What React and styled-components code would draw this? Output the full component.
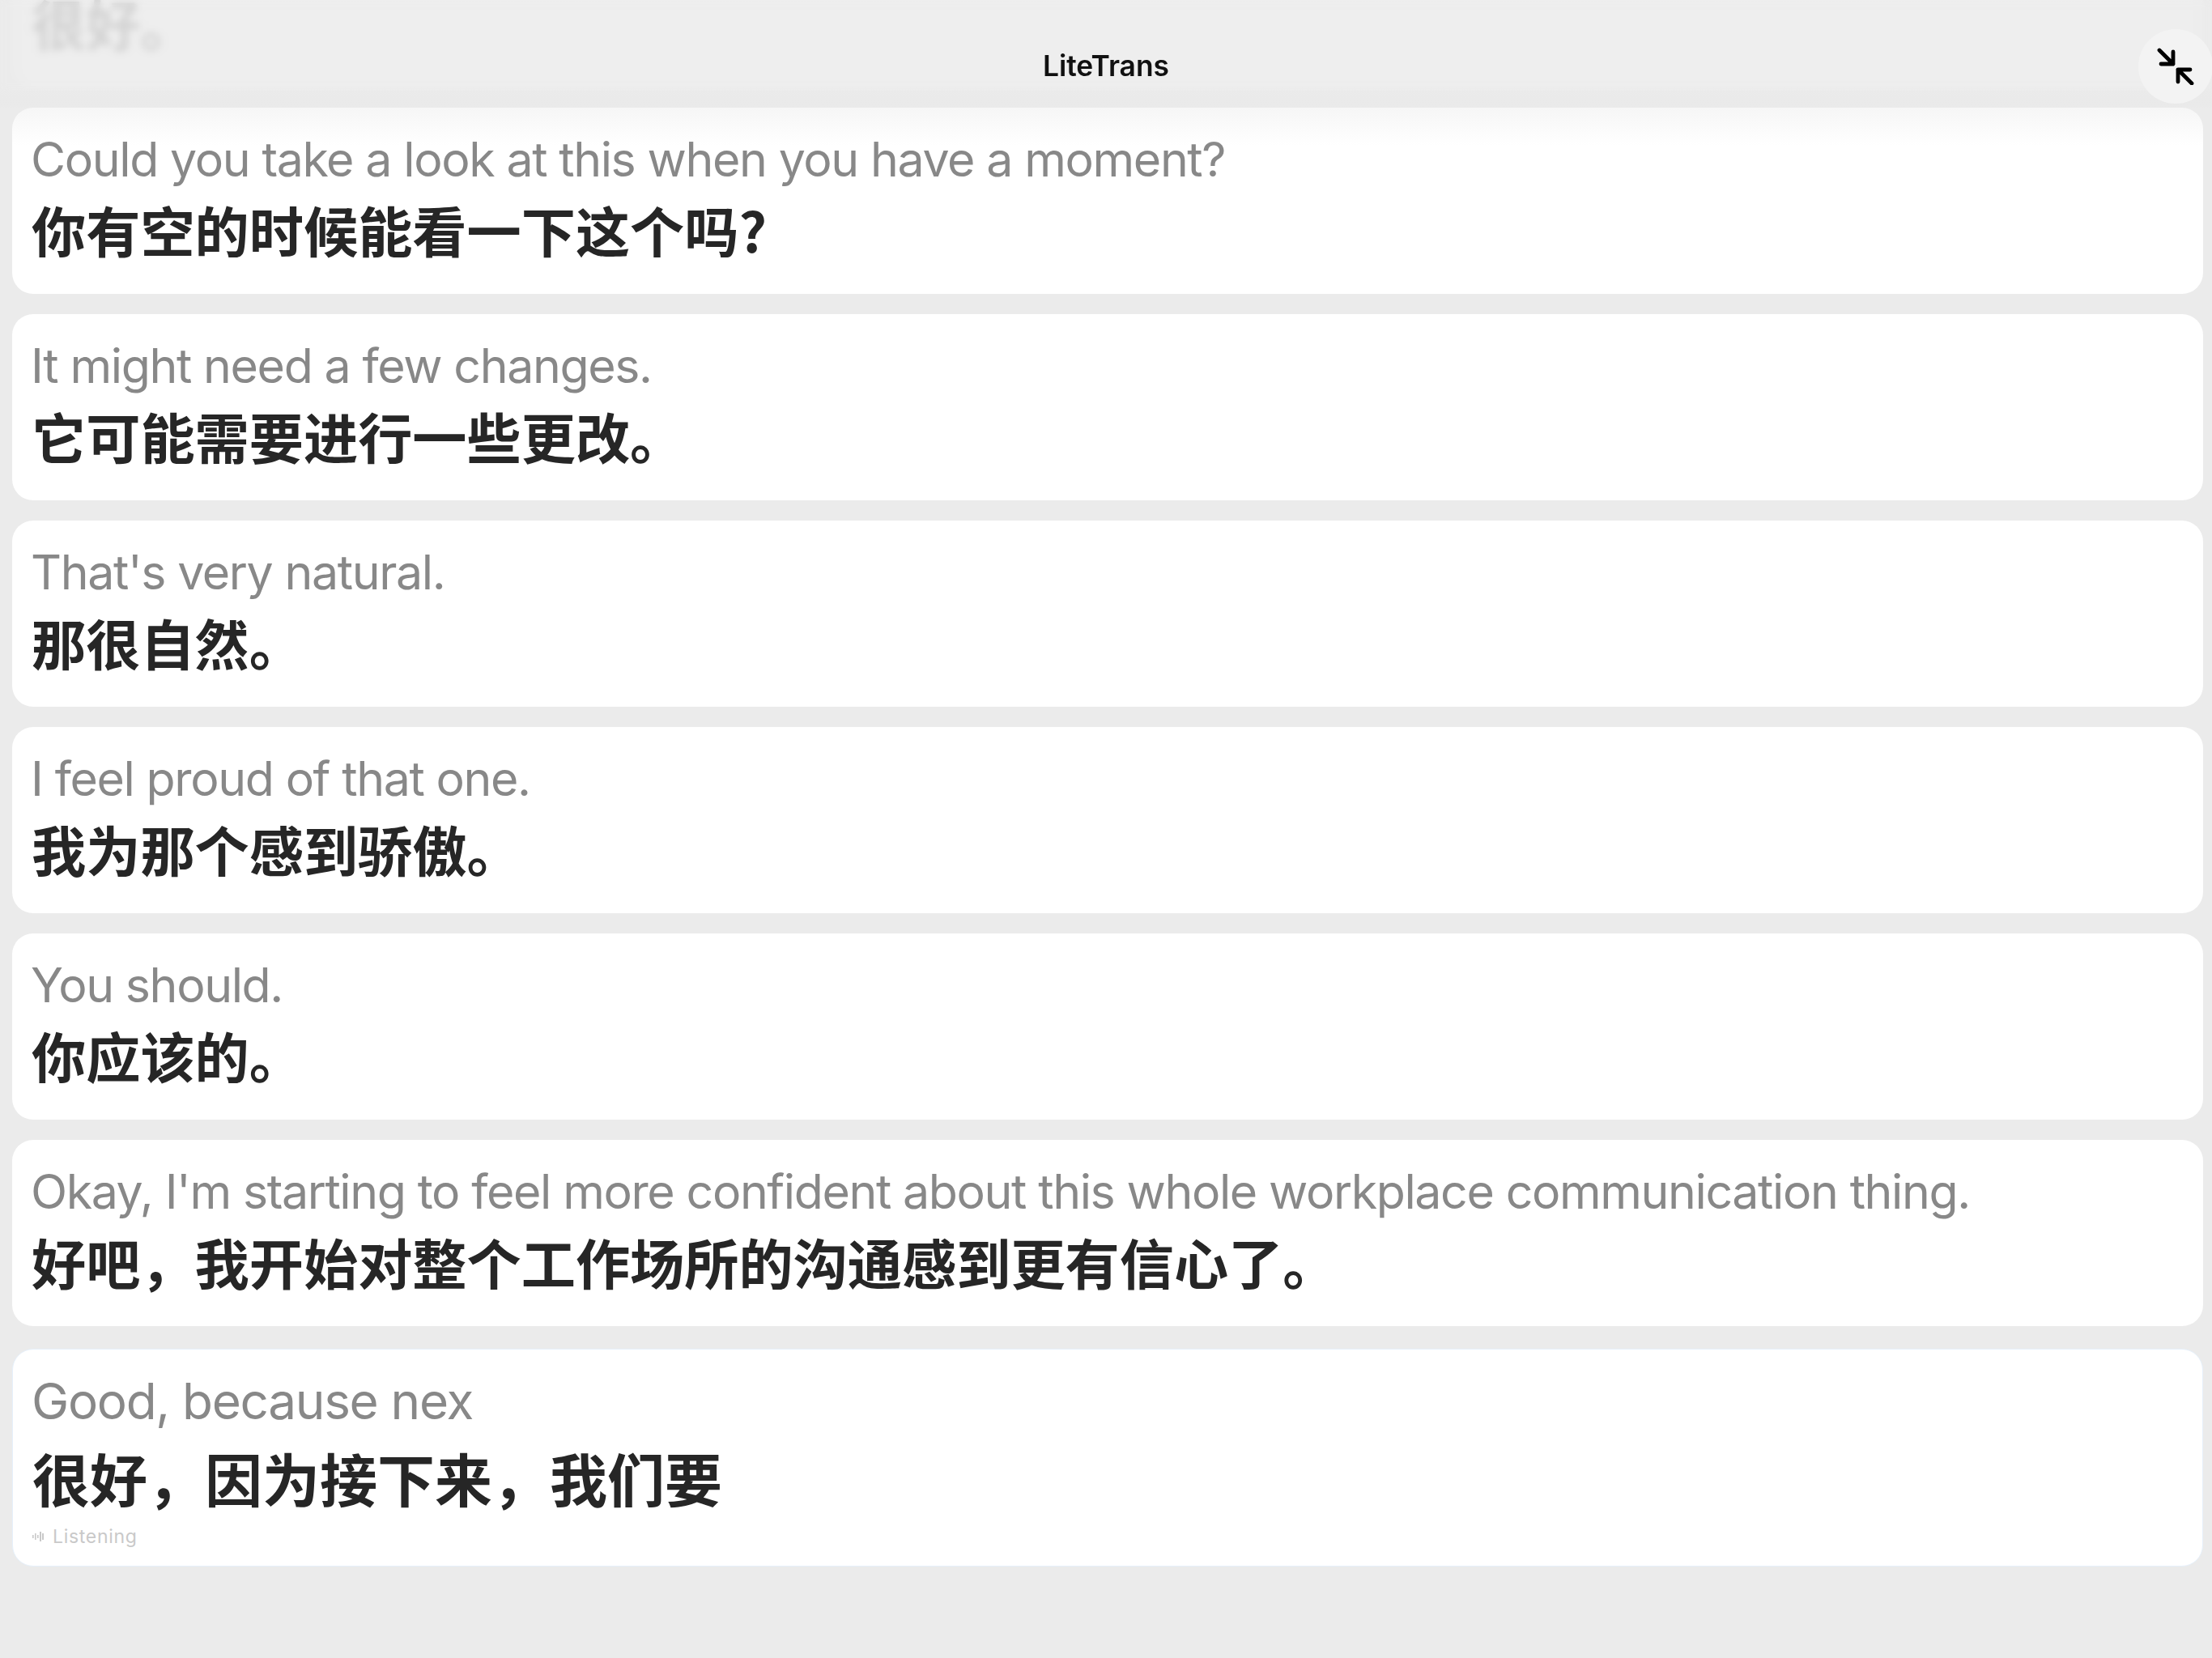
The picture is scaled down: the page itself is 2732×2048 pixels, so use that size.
import React from 'react';
import styled, { createGlobalStyle } from 'styled-components';

const GlobalStyle = createGlobalStyle`
  html, body {
    margin: 0;
    padding: 0;
    background: #ebebeb;
    font-family: Inter, "Noto Sans CJK SC", sans-serif;
  }
`;

const Screen = styled.div`
  position: relative;
  width: 2732px;
  height: 2048px;
  overflow: hidden;
  background: #ebebeb;
`;

/* chat style list, newest stays at the bottom and old ones run off the top */
const Feed = styled.div`
  height: 100%;
  box-sizing: border-box;
  display: flex;
  flex-direction: column;
  justify-content: flex-end;
  gap: 25px;
  padding: 0 11px 113px 15px;
`;

const Card = styled.div`
  flex: none;
  box-sizing: border-box;
  height: ${(p) => (p.$live ? '269px' : '230px')};
  margin-top: ${(p) => (p.$live ? '3px' : '0')};
  padding: ${(p) => (p.$live ? '26px 24px 0' : '28px 24px 0')};
  background: #fff;
  border-radius: 26px;
  border: ${(p) => (p.$live ? '1px solid #e6f0fb' : 'none')};
`;

const Source = styled.div`
  margin-left: -1px;
  font-size: ${(p) => (p.$live ? '62px' : '59px')};
  line-height: ${(p) => (p.$live ? '76px' : '72px')};
  letter-spacing: ${(p) => (p.$live ? '-1.3px' : '-1.38px')};
  color: #888;
  white-space: nowrap;
`;

const Target = styled.div`
  margin-top: ${(p) => (p.$live ? '13px' : '11px')};
  font-family: "Noto Sans CJK SC", sans-serif;
  font-weight: 700;
  font-size: ${(p) => (p.$live ? '71px' : '67.2px')};
  line-height: ${(p) => (p.$live ? '84px' : '78px')};
  color: #262626;
  white-space: nowrap;
`;

const Status = styled.div`
  display: flex;
  align-items: center;
  gap: 11px;
  margin-top: 17px;
  font-size: 23px;
  line-height: 30px;
  letter-spacing: 0.7px;
  color: #c9c9c9;
`;

const Header = styled.div`
  position: absolute;
  inset: 0 0 auto 0;
  height: 180px;
  background: linear-gradient(to bottom, rgba(235,235,235,0.88) 0%, rgba(235,235,235,0.88) 60%, rgba(233,233,233,0.7) 72%, rgba(235,235,235,0.45) 74%, rgba(235,235,235,0) 100%);

  &::before {
    content: '';
    position: absolute;
    inset: 0 0 auto 0;
    height: 112px;
    backdrop-filter: blur(5px);
    -webkit-backdrop-filter: blur(5px);
  }
`;

const Title = styled.div`
  position: absolute;
  top: 60px;
  left: 0;
  right: 0;
  text-align: center;
  font-size: 35.4px;
  line-height: 44px;
  font-weight: 600;
  color: #111;
`;

const CollapseButton = styled.button`
  position: absolute;
  top: 36px;
  right: -1px;
  width: 92px;
  height: 92px;
  padding: 0;
  display: flex;
  align-items: center;
  justify-content: center;
  border: none;
  border-radius: 50%;
  background: #f3f3f3;
  color: #000;
`;

const lines = [
  ['Okay.', '很好。'],
  ['Could you take a look at this when you have a moment?', '你有空的时候能看一下这个吗?'],
  ['It might need a few changes.', '它可能需要进行一些更改。'],
  ["That's very natural.", '那很自然。'],
  ['I feel proud of that one.', '我为那个感到骄傲。'],
  ['You should.', '你应该的。'],
  ["Okay, I'm starting to feel more confident about this whole workplace communication thing.", '好吧\uFF0C我开始对整个工作场所的沟通感到更有信心了。'],
];

function CollapseIcon() {
  return (
    <svg width="46" height="46" viewBox="0 0 46 46" fill="none" stroke="currentColor" strokeWidth="4.8" strokeLinecap="round" strokeLinejoin="round">
      <path d="M3 3L20 20M20 5V20H5" />
      <path d="M43 44L26 27M26 42V27H41" />
    </svg>
  );
}

function WaveIcon() {
  return (
    <svg width="14" height="14" viewBox="0 0 14 14" fill="#c9c9c9">
      <rect x="0" y="5" width="1.6" height="4" />
      <rect x="3" y="3" width="1.6" height="8" />
      <rect x="6" y="5" width="1.6" height="4" />
      <rect x="9" y="1" width="2" height="12" />
      <rect x="12" y="3" width="2" height="8" />
    </svg>
  );
}

export default function App() {
  return (
    <Screen>
      <GlobalStyle />
      <Feed>
        {lines.map(([source, target]) => (
          <Card key={target}>
            <Source>{source}</Source>
            <Target>{target}</Target>
          </Card>
        ))}
        <Card $live>
          <Source $live>Good, because nex</Source>
          <Target $live>{'很好\uFF0C因为接下来\uFF0C我们要'}</Target>
          <Status>
            <WaveIcon />
            Listening
          </Status>
        </Card>
      </Feed>
      <Header />
      <Title>LiteTrans</Title>
      <CollapseButton aria-label="Collapse">
        <CollapseIcon />
      </CollapseButton>
    </Screen>
  );
}
